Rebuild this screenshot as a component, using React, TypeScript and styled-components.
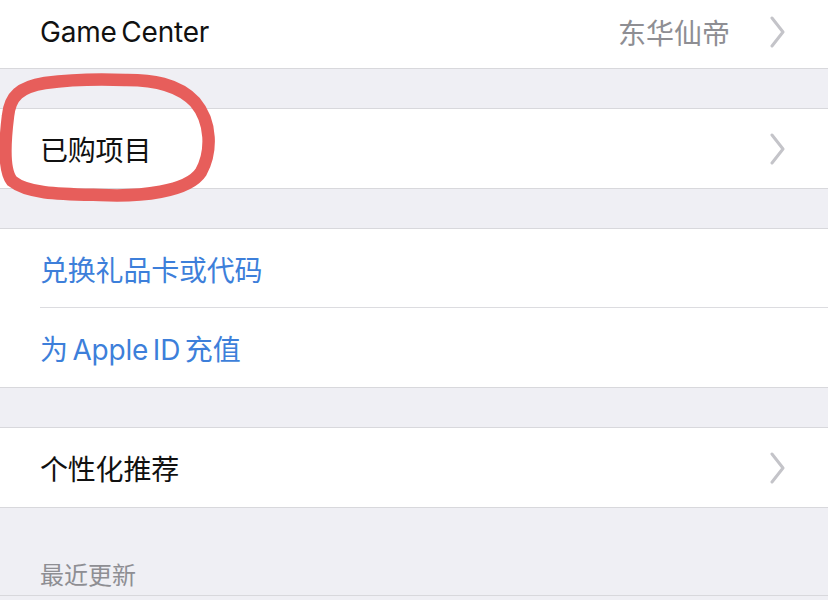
import React from 'react'
import styled, { createGlobalStyle } from 'styled-components'

const GlobalStyle = createGlobalStyle`
  html, body {
    margin: 0;
    padding: 0;
    background: #efeff4;
  }
  body {
    font-family: 'Inter', 'Noto Sans CJK SC', sans-serif;
    -webkit-font-smoothing: antialiased;
  }
`

const Page = styled.div`
  position: relative;
  width: 828px;
  height: 600px;
  overflow: hidden;
  background: #efeff4;
`

const Group = styled.div<{ $first?: boolean }>`
  background: #fff;
  border-top: ${(p) => (p.$first ? 'none' : '1px solid #d8d8dc')};
  border-bottom: 1px solid #d8d8dc;
  margin-top: ${(p) => (p.$first ? '0' : '39px')};
`

const Row = styled.div<{ $height?: number; $divider?: boolean }>`
  display: flex;
  align-items: center;
  height: ${(p) => p.$height || 79}px;
  padding: 0 43px 0 40px;
  box-sizing: border-box;
  position: relative;
  ${(p) =>
    p.$divider &&
    `
    &::after {
      content: '';
      position: absolute;
      left: 40px;
      right: 0;
      bottom: 0;
      height: 1px;
      background: #dcdce0;
    }
  `}
`

const Label = styled.span<{ $blue?: boolean }>`
  flex: 1;
  font-size: 28px;
  letter-spacing: -0.2px;
  word-spacing: -3px;
  color: ${(p) => (p.$blue ? '#3d7fda' : '#111')};
`

const Detail = styled.span`
  font-size: 28px;
  color: #8e8e93;
  margin-right: 40px;
`

const Chevron = () => (
  <svg width="15" height="32" viewBox="0 0 15 32">
    <polyline
      points="2,2 13,16 2,30"
      fill="none"
      stroke="#c4c4c9"
      strokeWidth="3"
      strokeLinecap="round"
      strokeLinejoin="round"
    />
  </svg>
)

const SectionHeader = styled.div`
  height: 88px;
  padding: 0 40px 4px;
  box-sizing: border-box;
  display: flex;
  align-items: flex-end;
  font-size: 24px;
  color: #8e8e93;
  border-bottom: 1px solid #d8d8dc;
`

const Scribble = styled.svg`
  position: absolute;
  left: 0;
  top: 0;
  pointer-events: none;
`

export default function App() {
  return (
    <Page>
      <GlobalStyle />
      <Group $first>
        <Row $height={64}>
          <Label>Game Center</Label>
          <Detail>东华仙帝</Detail>
          <Chevron />
        </Row>
        <Row $height={4} />
      </Group>
      <Group>
        <Row>
          <Label>已购项目</Label>
          <Chevron />
        </Row>
      </Group>
      <Group>
        <Row $divider>
          <Label $blue>兑换礼品卡或代码</Label>
        </Row>
        <Row>
          <Label $blue>为 Apple ID 充值</Label>
        </Row>
      </Group>
      <Group>
        <Row>
          <Label>个性化推荐</Label>
          <Chevron />
        </Row>
      </Group>
      <SectionHeader>最近更新</SectionHeader>
      <Scribble width="240" height="220" viewBox="0 0 240 220">
        <path
          d="M 120 80 C 152 79, 178 84, 195 102 C 212 122, 212 152, 201 172 C 188 192, 140 197, 100 195 C 60 194, 28 194, 12 181 C 3 170, 5 140, 8 116 C 10 96, 20 87, 45 83 C 75 79, 100 79, 125 80"
          fill="none"
          stroke="#e75e5b"
          strokeWidth="12.5"
          strokeLinecap="round"
          strokeLinejoin="round"
        />
      </Scribble>
    </Page>
  )
}
